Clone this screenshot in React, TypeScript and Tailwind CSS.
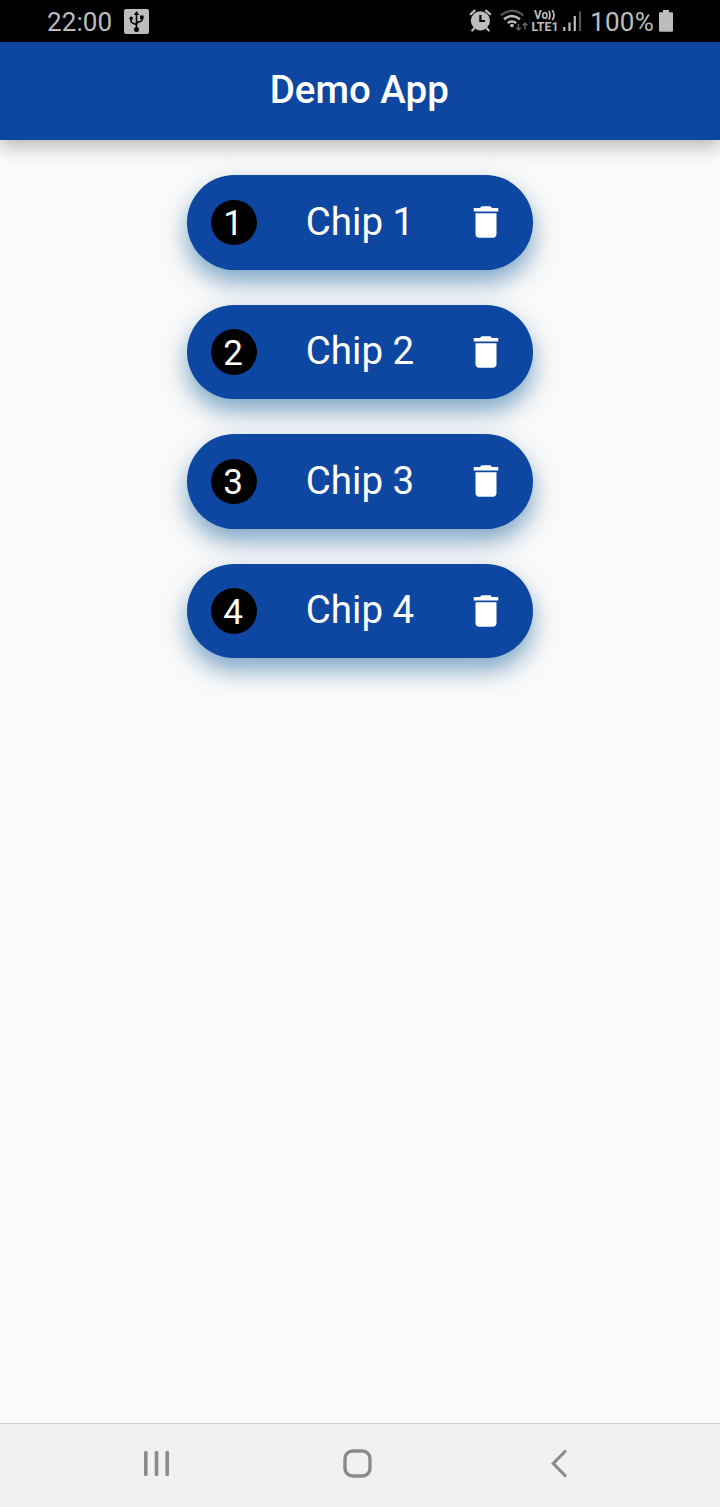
const chips = [1, 2, 3, 4];

function StatusBar() {
  return (
    <div className="flex h-[42px] shrink-0 items-center bg-black pt-[2px] text-[#bdbdbd]">
      <span className="ml-[47px] w-[77px] text-[26px] leading-[40px] tracking-[0.1px]">22:00</span>
      <svg width="25" height="25" viewBox="0 0 25 25" className="-mt-[2px]">
        <rect width="25" height="25" rx="2" fill="#bdbdbd" />
        <g stroke="#000" strokeWidth="1.6" fill="none">
          <path d="M12.5 20V5M7 9v3.500c0 1.800 5.500 2 5.500 4M18 8v3c0 2-5.500 1.700-5.500 4" />
        </g>
        <path d="M12.5 2l2.700 4h-5.400z" fill="#000" />
        <circle cx="12.5" cy="20.5" r="2.5" fill="#000" />
        <circle cx="7.2" cy="9.2" r="1.8" fill="#000" />
        <rect x="16" y="6.5" width="3.6" height="3.6" fill="#000" />
      </svg>
      <div className="ml-auto flex w-[251px] items-center">
        <svg width="120" height="42" viewBox="460 0 120 42" className="-mt-[2px] -ml-[9px] shrink-0 overflow-visible">
          <g stroke="#bdbdbd" fill="none" strokeWidth="2.2" strokeLinecap="round">
            <path d="M470.700 14.200l4-3.500M490 14.200l-4-3.500M474.200 28.500l-2 2M486.800 28.500l2 2" />
          </g>
          <circle cx="480.4" cy="20.8" r="9.6" fill="#bdbdbd" />
          <path d="M480.400 15v6h4.600" fill="none" stroke="#000" strokeWidth="2.2" />
          <g fill="none" strokeWidth="2.4">
            <path d="M500.700 15.400q11.300-9.200 22.600 0" stroke="#555" />
            <path d="M504 19.300q8-6.400 16 0M507.800 23.100q4.200-3.400 8.400 0" stroke="#bdbdbd" />
          </g>
          <circle cx="512" cy="25.6" r="1.8" fill="#bdbdbd" />
          <path d="M518.500 24v6M516.200 27.500l2.300 2.500 2.300-2.500M525 29.500v-6.500M522.700 25.500l2.300-2.500 2.300 2.500" stroke="#666" strokeWidth="1.5" fill="none" />
          <text x="534" y="19" fontSize="12" fontWeight="700" fill="#bdbdbd" textLength="14" lengthAdjust="spacingAndGlyphs">Vo</text>
          <path d="M548.800 10.800q2.400 4.400 0 8.800M552.300 10.200q3.500 5 0 9.800" fill="none" stroke="#bdbdbd" strokeWidth="1.7" />
          <text x="531.5" y="31" fontSize="12.5" fontWeight="700" fill="#bdbdbd" textLength="27" lengthAdjust="spacingAndGlyphs">LTE1</text>
          <path d="M564.300 27v4M569.500 22.500V31M574.800 16V31" stroke="#bdbdbd" strokeWidth="2.2" />
          <path d="M580 11.300V31" stroke="#555" strokeWidth="2.2" />
        </svg>
        <span className="ml-[10px] w-[69px] shrink-0 text-[26px] leading-[40px] tracking-[0.3px]">100%</span>
        <svg width="14" height="22" viewBox="0 0 14 22" className="-mt-[3px] shrink-0">
          <path d="M4 0h6v2.300h2.800q1.200 0 1.200 1.200V20.500q0 1.200-1.200 1.200H1.200Q0 21.700 0 20.500V3.500Q0 2.300 1.200 2.300H4z" fill="#bdbdbd" />
        </svg>
      </div>
    </div>
  );
}

function Chip({ number }: { number: number }) {
  return (
    <div className="flex h-[94.5px] w-[346.5px] items-center rounded-full bg-[#0d47a1] pr-[26px] pl-[24.5px] text-white shadow-[0_12px_24px_rgba(0,81,145,0.5)]">
      <div className="flex size-[45.5px] items-center justify-center rounded-full bg-black pt-[3.5px] pr-[2px] text-[35px] leading-[40px]">
        {number}
      </div>
      <span className="ml-[49px] grow pb-[1px] text-[38.5px] leading-[46px] whitespace-nowrap">Chip {number}</span>
      <svg width="42" height="42" viewBox="0 0 24 24" fill="currentColor">
        <path d="M6 19c0 1.100.9 2 2 2h8c1.100 0 2-.9 2-2V7H6v12zM19 4h-3.500l-1-1h-5l-1 1H5v2h14V4z" />
      </svg>
    </div>
  );
}

function NavigationBar() {
  return (
    <nav className="flex h-[84px] shrink-0 items-center border-t border-[#d2d2d2] bg-[#f1f1f1] pb-[4px] text-[#8b8b8b]">
      <svg width="28" height="28" viewBox="0 0 28 28" className="ml-[143px]" fill="none" stroke="currentColor" strokeWidth="3.6" strokeLinecap="round">
        <path d="M2.800 2.500v22M13.500 2.500v22M24.200 2.500v22" />
      </svg>
      <svg width="30" height="30" viewBox="0 0 30 30" className="ml-[172px]" fill="none" stroke="currentColor" strokeWidth="3.4">
        <rect x="2" y="2" width="25" height="25" rx="7.5" />
      </svg>
      <svg width="20" height="30" viewBox="0 0 20 30" className="ml-[177px]" fill="none" stroke="currentColor" strokeWidth="3.2" strokeLinecap="round">
        <path d="M15 2.500L3.300 14.500l11.700 12" />
      </svg>
    </nav>
  );
}

export default function App() {
  return (
    <div className="flex h-[1507px] w-[720px] flex-col overflow-hidden bg-[#fafafa] font-['Roboto',sans-serif]">
      <StatusBar />
      <header className="z-10 flex h-[98px] shrink-0 items-center justify-center bg-[#0d47a1] pr-[1.5px] pb-[2px] text-[38.5px] font-medium text-white shadow-[0_7px_16px_rgba(0,0,0,0.2),0_5px_24px_rgba(0,0,0,0.08)]">
        <h1>Demo App</h1>
      </header>
      <main className="flex grow flex-col items-center gap-[35px] pt-[35px]">
        {chips.map((number) => (
          <Chip key={number} number={number} />
        ))}
      </main>
      <NavigationBar />
    </div>
  );
}
